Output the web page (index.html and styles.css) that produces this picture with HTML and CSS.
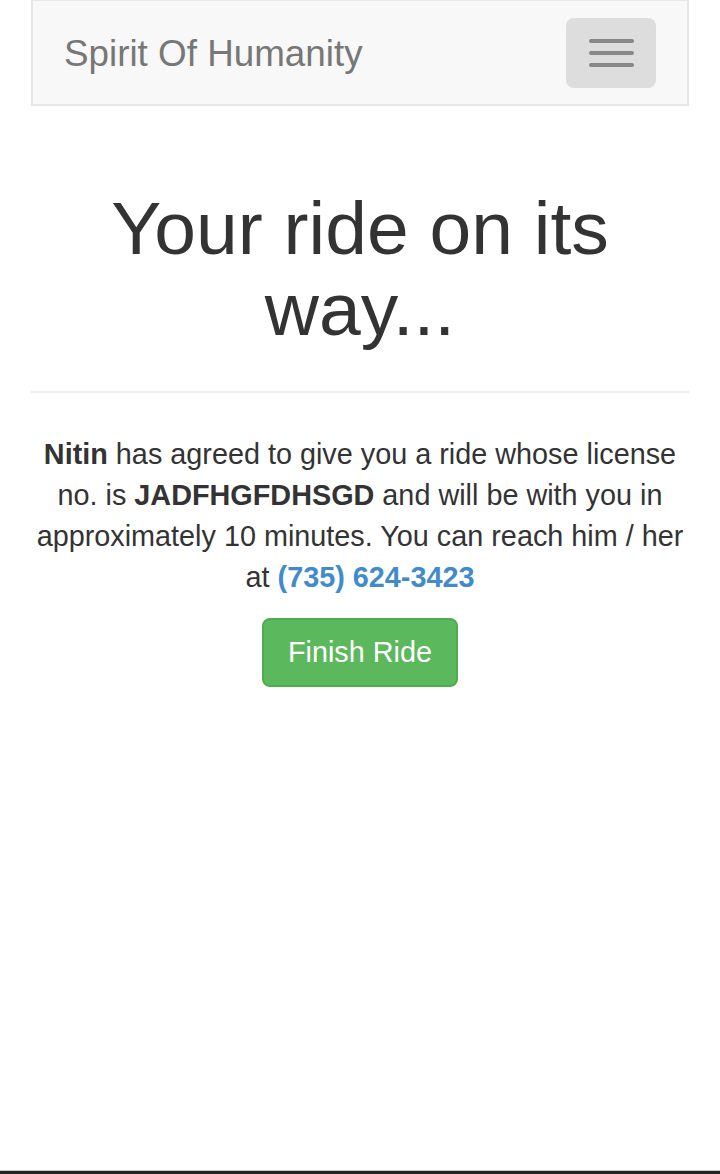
FILE: index.html
```html
<!DOCTYPE html>
<html lang="en">
<head>
<meta charset="utf-8">
<title>Spirit Of Humanity</title>
<link rel="stylesheet" href="styles.css">
</head>
<body>
<div class="container">
  <nav class="navbar">
    <a class="brand" href="#">Spirit Of Humanity</a>
    <button class="toggle" type="button" aria-label="Toggle navigation">
      <span class="bar"></span>
      <span class="bar"></span>
      <span class="bar"></span>
    </button>
  </nav>
  <main class="content">
    <h1 class="title">Your ride on its way...</h1>
    <hr class="rule">
    <p class="info"><strong>Nitin</strong> has agreed to give you a ride whose license no. is <strong>JADFHGFDHSGD</strong> and will be with you in approximately 10 minutes. You can reach him / her at <a class="phone" href="#">(735) 624-3423</a></p>
    <button class="btn-finish" type="button">Finish Ride</button>
  </main>
</div>
<div class="bottom-bar"></div>
</body>
</html>
```
FILE: styles.css
```css
* { box-sizing: border-box; }
html, body { margin: 0; padding: 0; }
body {
  font-family: "Liberation Sans", Arial, sans-serif;
  font-size: 28.8px;
  line-height: 41px;
  color: #333;
  background: #fff;
}
.container {
  padding: 0 31px;
}
.navbar {
  display: flex;
  align-items: flex-start;
  justify-content: space-between;
  height: 106px;
  background: #f8f8f8;
  border: 2px solid #e7e7e7;
  border-top-width: 1px;
  margin-bottom: 41px;
}
.brand {
  display: block;
  padding: 32px 31px 30px;
  font-size: 36.8px;
  line-height: 41px;
  color: #777;
  text-decoration: none;
}
.toggle {
  display: flex;
  flex-direction: column;
  justify-content: center;
  align-items: center;
  gap: 8px;
  width: 90px;
  height: 70px;
  margin: 17px 31px 0 0;
  padding: 0;
  background: #ddd;
  border: none;
  border-radius: 8px;
}
.bar {
  display: block;
  width: 45px;
  height: 4px;
  border-radius: 2px;
  background: #888;
}
.content {
  padding-top: 41px;
  text-align: center;
}
.title {
  margin: 0 0 20px;
  font-size: 75px;
  line-height: 81px;
  font-weight: 500;
}
.rule {
  margin: 41px 0;
  border: 0;
  border-top: 2px solid #eee;
}
.info {
  margin: 0 0 20px;
}
.phone {
  color: #428bca;
  font-weight: bold;
  text-decoration: none;
}
.btn-finish {
  font-family: inherit;
  font-size: 28.8px;
  line-height: 41px;
  padding: 12px 24px;
  color: #fff;
  background: #5cb85c;
  border: 2px solid #4cae4c;
  border-radius: 8px;
}
.bottom-bar {
  position: fixed;
  left: 0;
  right: 0;
  bottom: 0;
  height: 4px;
  background: #222;
  border-top: 1px solid #c8c8c8;
}
```
